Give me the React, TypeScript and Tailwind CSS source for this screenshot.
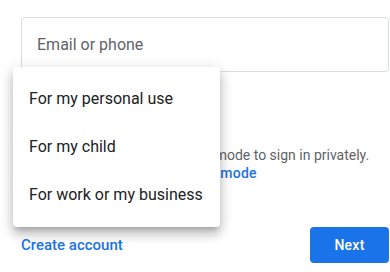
const menuItems = ['For my personal use', 'For my child', 'For work or my business']

export default function App() {
  return (
    <div className="relative h-[272px] w-[390px] overflow-hidden bg-white pt-[17px] pl-[21px] pr-[1px] font-['Roboto',_'Liberation_Sans',_sans-serif]">
      <div className="flex h-[55px] items-center rounded border border-[#dadce0] pl-[15px] text-base text-[#5f6368]">
        Email or phone
      </div>

      <div className="mt-[74px] text-sm leading-[18px]">
        <p className="text-[#5f6368]">Not your computer? Use Guest mode to sign in privately.</p>
        <a className="font-medium tracking-[0.25px] text-[#1a73e8]">Learn more about using Guest mode</a>
      </div>

      <div className="mt-[45px] flex items-center justify-between">
        <a className="text-[15px] font-medium text-[#1a73e8]">Create account</a>
        <button className="h-9 w-[79px] rounded bg-[#1a73e8] text-sm font-medium tracking-[0.25px] text-white">Next</button>
      </div>

      <div className="absolute left-[13px] top-[67px] w-[207px] rounded bg-white py-2 shadow-[0_5px_5px_-3px_rgba(0,0,0,0.2),0_8px_10px_1px_rgba(0,0,0,0.14),0_3px_14px_2px_rgba(0,0,0,0.12)]">
        {menuItems.map(item => (
          <div key={item} className="flex h-12 items-center pl-4 text-base text-[#202124]">
            {item}
          </div>
        ))}
      </div>
    </div>
  )
}
